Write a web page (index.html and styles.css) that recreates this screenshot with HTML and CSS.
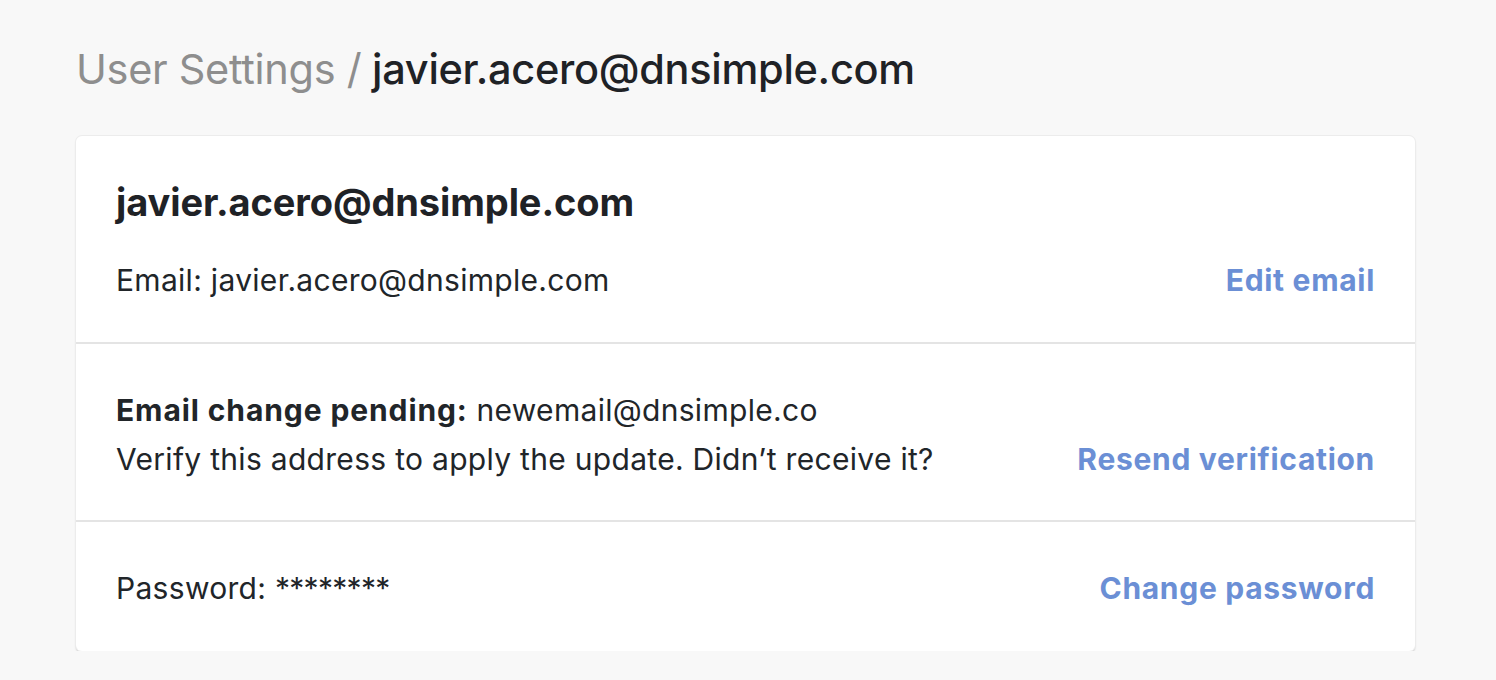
FILE: index.html
```html
<!DOCTYPE html>
<html lang="en">
<head>
<meta charset="utf-8">
<title>User Settings</title>
<link rel="stylesheet" href="styles.css">
</head>
<body>
<main class="page">
  <h1 class="page-title"><span class="crumb">User Settings /</span> <span class="current">javier.acero@dnsimple.com</span></h1>
  <section class="card">
    <div class="card-section section-email">
      <h2 class="card-heading">javier.acero@dnsimple.com</h2>
      <div class="row">
        <p class="row-text">Email: javier.acero@dnsimple.com</p>
        <a class="row-link" href="#">Edit email</a>
      </div>
    </div>
    <div class="card-section section-pending">
      <div class="row row-bottom">
        <div class="row-text">
          <p class="line"><strong>Email change pending:</strong> newemail@dnsimple.co</p>
          <p class="line">Verify this address to apply the update. Didn’t receive it?</p>
        </div>
        <a class="row-link" href="#">Resend verification</a>
      </div>
    </div>
    <div class="card-section section-password">
      <div class="row">
        <p class="row-text">Password: <span class="mask">********</span></p>
        <a class="row-link" href="#">Change password</a>
      </div>
    </div>
  </section>
</main>
</body>
</html>
```
FILE: styles.css
```css
html, body {
  margin: 0;
  padding: 0;
  background: #f8f8f8;
}

body {
  font-family: "Inter", "Liberation Sans", sans-serif;
  color: #212529;
}

.page {
  width: 1339px;
  padding: 42px 0 0 76px;
}

.page-title {
  margin: 0 0 40px 0;
  font-size: 41.5px;
  line-height: 54px;
  font-weight: 500;
  letter-spacing: -0.3px;
}

.crumb {
  color: #8e8e8e;
  font-weight: 400;
}

.current {
  color: #1f2226;
}

.card {
  background: #ffffff;
  border-radius: 6px;
  box-shadow: 0 0 0 1px #ececec, 0 2px 2px rgba(0, 0, 0, 0.24);
}

.card-section {
  padding: 0 40px;
  border-bottom: 2px solid #e4e4e4;
}

.card-section:last-child {
  border-bottom: none;
}

.section-email {
  padding-top: 44px;
  height: 162px;
}

.section-pending {
  padding-top: 42px;
  height: 134px;
}

.section-password {
  padding-top: 42px;
  height: 87px;
}

.card-heading {
  margin: 0 0 32px 0;
  font-size: 38px;
  line-height: 44px;
  font-weight: 700;
  letter-spacing: -0.1px;
  color: #1f2226;
}

.row {
  display: flex;
  justify-content: space-between;
  align-items: center;
}

.row-bottom {
  align-items: flex-end;
}

.row-text {
  margin: 0;
  font-size: 30px;
  line-height: 49px;
  letter-spacing: 0.3px;
}

.line {
  margin: 0;
}

.line strong {
  font-weight: 700;
  letter-spacing: 0.9px;
}

.mask {
  letter-spacing: -0.7px;
}

.row-link {
  font-size: 30px;
  line-height: 49px;
  font-weight: 700;
  letter-spacing: 0.7px;
  color: #6b8fd5;
  text-decoration: none;
}
```
